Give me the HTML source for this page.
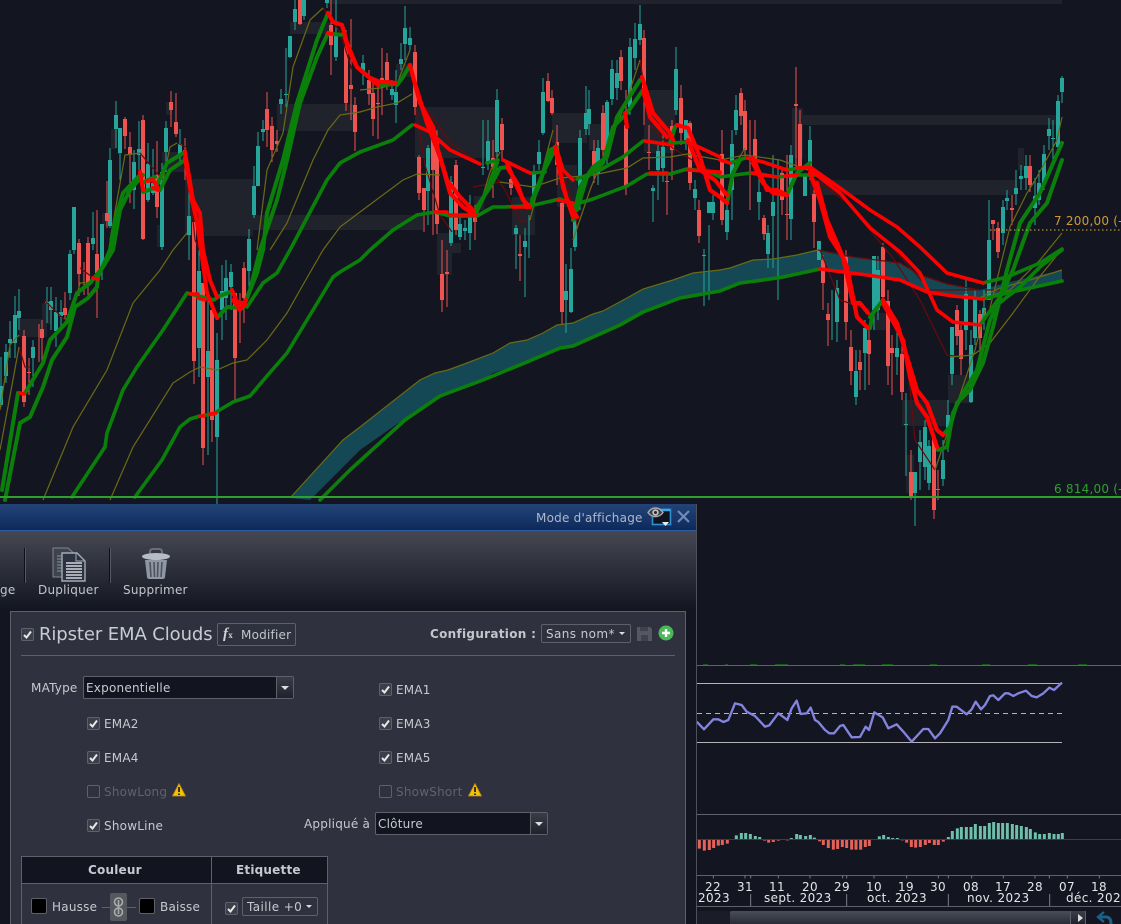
<!DOCTYPE html>
<html><head><meta charset="utf-8">
<style>
html,body{margin:0;padding:0;background:#131620;width:1121px;height:924px;overflow:hidden}
body{position:relative;font-family:"DejaVu Sans","Liberation Sans",sans-serif;font-size:12px;color:#c6cad0;letter-spacing:.22px}
svg{position:absolute;left:0;top:0}
.a{position:absolute;white-space:nowrap;line-height:14px}
.cb{position:absolute;width:11px;height:11px;border:1px solid #5e606a;border-radius:2px;background:#3c3e4a}
.cb svg{left:0;top:0}
.cb.off{background:#2f323e}
.dis{color:#5f626c}
.sel{position:absolute;box-sizing:border-box;background:#12151f;border:1px solid #5e606a;border-radius:2px;line-height:22px;padding-left:2px;color:#c6cad0}
.sel i{position:absolute;right:0;top:0;bottom:0;width:16px;border-left:1px solid #5e606a;background:linear-gradient(#3a3d48,#20232d)}
.sel i:after{content:"";position:absolute;left:4px;top:9px;border:4px solid transparent;border-top:4px solid #ddd;border-bottom:0}
.dd{position:absolute;box-sizing:border-box;border:1px solid #5e606a;border-radius:2px;background:#2f323e;color:#c6cad0;padding-left:4px}
.dd:after{content:"";position:absolute;right:5px;top:7px;border:3px solid transparent;border-top:3px solid #ddd;border-bottom:0}
.ax{font-size:12px;color:#e4e6ea;position:absolute;white-space:nowrap;line-height:13px;letter-spacing:.35px}
</style></head><body>

<svg width="1121" height="924" viewBox="0 0 1121 924" fill="none">
<!-- zones -->
<path fill="#20232c" d="M185 179h68v57h-68zM277 104h76v27h-76zM250 215h173v15H250zM415 107h82v51h-82zM327 0h735v4H327zM552 113h35v30h-35zM644 90h31v63h-31zM792 115h265v10H792zM792 108h11v50h-11zM810 180h207v15H810zM512 197h23v38h-23zM557 165h20v42h-20zM290 22h40v12h-40zM162 152h23v20h-23zM437 233h15v42h-15zM19 319h28v18H19zM42 303h10v21H42zM902 400h46v26h-46zM948 375h25v28h-25zM873 313h14v17h-14zM396 64h17v13H396zM589 124h16v26h-16zM111 129h6v20h-6zM116 153h4v1h-4zM166 102h6v13h-6zM102 213h5v13H102zM157 225h6v22h-6zM447 243h14v10h-14zM474 196h10v14h-10zM906 455h8v38h-8zM1018 148h6v22h-6z"/>
<!-- cloud band -->
<path fill="#134854" d="M290 498L343 440 360 427 380 412 420 380 435 373 448 370 467 363 493 353 510 343 527 340 543 333 557 325 573 323 593 314 603 311 627 298 643 289 673 280 693 273 720 270 730 268 753 260 773 259 797 255 818 250 843 254 853 257 900 263 920 275 947 284 980 290 1010 282 1062 270V281L1007 293 983 299 953 296 927 292 900 280 867 275 820 269 783 277 763 280 740 283 720 291 680 298 643 312 620 325 573 346 560 348 527 362 493 373 483 380 430 402 400 422 360 450 310 500Z"/>
<!-- wicks teal -->
<path stroke="#26a69a" stroke-width="1" d="M1 357V407M6 344V383M10 321V358M15 296V358M19 289V330M33 340V387M47 287V323M51 287V330M56 297V347M61 300V330M70 250V300M74 240V254M93 212V250M102 224V280M110 148V228M116 101V148M120 128V180M134 150V209M139 121V170M148 143V202M153 149V195M162 163V250M166 121V172M180 129V165M189 191V260M199 250V377M208 300V455M217 333V505M222 265V340M226 260V320M231 264V310M249 229V290M254 166V218M258 132V186M263 120V141M281 89V114M286 48V107M290 36V58M295 0V30M304 0V20M327 0V8M336 0V61M363 55V85M392 80V100M396 70V123M401 43V70M405 6V60M410 27V50M428 145V225M451 176V246M460 215V240M465 220V240M470 195V250M483 120V175M488 120V170M497 89V170M516 225V269M525 228V297M529 215V258M534 165V205M539 140V170M543 78V135M566 264V333M571 248V313M575 205V251M580 130V210M586 86V135M589 90V135M598 140V185M607 100V165M612 60V105M617 60V100M630 38V115M635 23V70M640 5V45M653 185V222M658 145V200M663 130V182M676 47V115M686 120V150M695 180V210M709 225V300M704 249V306M713 195V220M727 205V240M732 130V220M736 95V135M759 170V220M768 225V268M773 155V268M778 160V300M791 145V240M810 126V180M837 280V342M832 290V340M856 350V405M865 320V390M874 256V330M878 256V320M897 330V375M906 393V476M915 472V526M920 430V490M925 420V480M929 440V490M943 440V486M948 400V452M952 327V385M966 280V350M971 330V403M975 290V345M984 290V330M989 200V290M1003 200V245M1007 190V210M1016 170V205M1021 165V190M1026 155V190M1035 178V225M1039 170V205M1044 145V190M1049 118V150M1053 120V160M1058 95V150M1062 76V103"/>
<!-- wicks red -->
<path stroke="#ef5350" stroke-width="1" d="M24 330V407M29 358V395M39 324V362M42 320V362M65 292V320M79 239V296M84 262V295M88 237V295M97 210V318M107 181V228M125 117V149M130 132V203M143 115V240M157 141V218M171 91V127M176 93V137M185 138V180M194 222V384M203 283V465M212 300V442M235 293V402M240 293V343M244 262V323M267 92V147M272 117V162M277 130V152M300 0V25M331 0V75M346 30V111M351 19V120M355 97V151M369 70V105M373 80V136M378 85V139M382 48V115M387 53V90M415 45V115M419 155V200M424 188V232M433 130V235M437 130V234M442 240V312M447 250V307M456 160V235M475 205V240M493 140V198M502 118V160M511 170V195M520 235V281M548 73V102M552 90V115M557 125V185M562 200V325M594 140V183M603 105V160M621 50V90M626 90V195M644 30V125M649 125V170M667 175V215M672 120V180M681 85V145M690 121V190M699 200V243M722 130V225M741 88V125M745 100V160M750 120V210M755 120V175M764 215V240M782 170V215M787 155V240M796 67V167M800 110V175M814 190V248M823 255V310M828 303V346M846 250V340M851 330V385M860 350V390M869 330V385M883 243V305M888 290V385M892 335V395M902 345V400M911 450V500M934 439V519M938 470V500M957 305V345M961 325V375M980 310V365M993 220V240M998 222V258M1012 195V225M1030 155V192"/>
<!-- bodies teal -->
<path stroke="#26a69a" stroke-width="4" d="M1 386V405M6 352V376M10 339V343M15 315V343M19 311V318M33 347V358M47 302V303M51 301V310M56 312V331M61 312V316M70 254V293M74 207V250M93 238V244M102 224V267M110 160V226M116 115V129M120 128V153M134 162V190M139 149V155M148 164V200M153 183V193M162 172V247M166 128V152M180 144V155M189 216V235M199 271V348M208 351V377M217 360V437M222 291V310M226 278V298M231 272V287M249 239V271M254 186V215M258 146V186M263 129V132M281 99V104M286 94V95M290 36V57M295 9V22M304 0V16M327 0V3M336 35V57M363 63V72M392 89V95M396 92V105M401 59V64M405 28V44M410 38V45M428 148V191M451 182V243M460 224V237M465 228V231M470 213V233M483 167V168M488 141V163M497 100V152M516 228V234M525 241V247M534 174V195M539 152V164M543 92V133M566 291V300M571 269V312M575 220V247M580 138V200M586 113V129M589 109V124M598 148V173M607 102V150M612 69V99M617 73V88M630 47V107M635 39V58M640 24V40M653 188V191M658 151V170M663 147V168M676 69V110M686 120V140M695 189V198M709 202V213M704 255V256M713 202V213M727 210V232M732 144V190M736 110V130M759 192V202M768 233V254M773 202V216M791 155V219M805 175V196M810 140V167M819 241V260M837 288V322M856 371V397M865 328V353M874 256V310M878 270V310M897 348V357M906 424V425M915 472V493M920 442V462M925 427V467M929 446V483M943 460V479M948 415V428M952 327V374M966 294V330M971 345V402M975 299V338M984 308V320M989 240V300M1003 207V233M1007 198V201M1016 188V194M1021 176V179M1026 166V178M1035 196V208M1039 183V200M1044 154V184M1049 129V136M1053 138V139M1058 101V147M1062 78V92"/>
<!-- bodies red -->
<path stroke="#ef5350" stroke-width="4" d="M24 336V402M29 372V373M42 329V338M65 308V315M79 243V274M88 243V286M97 254V273M107 213V221M125 119V136M130 147V155M143 120V239M157 175V207M171 102V110M176 122V134M185 150V152M194 222V361M203 283V448M212 310V420M235 293V358M244 268V298M267 109V130M272 126V150M277 141V144M300 0V24M331 25V45M346 46V103M351 85V89M355 105V132M369 80V94M373 93V119M378 103V104M382 78V85M387 62V80M415 52V107M419 157V193M424 188V210M433 134V170M437 138V224M442 274V300M447 272V274M456 165V230M475 209V222M493 158V167M502 124V150M511 179V188M520 254V256M548 81V101M552 98V113M557 142V165M562 203V312M594 151V166M603 113V150M621 57V81M626 125V187M644 38V88M649 152V153M667 181V182M672 126V150M681 98V133M690 123V183M699 210V236M722 154V220M741 93V116M745 111V150M755 139V167M764 218V234M782 173V200M787 214V215M796 104V106M800 124V167M814 194V222M823 260V283M828 314V320M846 257V322M851 347V371M860 362V370M869 340V354M883 247V297M888 301V366M892 348V353M902 354V392M911 472V496M934 439V510M938 489V490M957 310V336M961 330V359M980 314V338M993 220V224M998 228V252M1012 208V210M1030 166V185"/>
<!-- thin dark red -->
<g stroke="#6a0a0c" stroke-width="1.2">
<path d="M19 347L25 367 30 367M44 300L67 322M80 268L92 277M125 155L140 153 163 180M177 143L186 147 195 240 207 265M323 8L340 32 352 70M417 97L437 123 450 143 480 163M473 187L500 182M416 110L425 165 440 215 452 232M490 168L505 190 520 220 527 222M555 140L575 215 578 230M640 60L650 125 668 145 700 165 720 175M810 170L840 190 870 230 893 258 920 300 947 355 960 357M810 175L850 205 890 245 930 290 980 290M820 250L840 300 870 310M985 290L1010 290M905 340L915 440 935 470"/>
</g>
<!-- thin olive -->
<g stroke="#6b6a14" stroke-width="1.2">
<path d="M0 450L19 347M43 500L73 427 107 370 133 303 160 270 173 250 187 233M110 500L133 447 173 383 190 372 200 367 217 370 233 363 247 360 267 340 287 313 300 290 323 250 340 227 360 212 403 180 417 174 440 175M500 182L533 187 560 178 593 175 627 168 643 158 670 157 687 154 720 160 745 155 780 160 808 170"/>
<path d="M270 250L287 223 313 160 328 130 340 115 360 112 377 107 397 103 412 94M257 250L267 170 283 133 293 67 310 20 323 8M110 240L125 155 140 153M163 180L170 147 177 143M71 320L80 283 90 282M0 410L10 345 19 335M360 90L380 88 397 84 410 50M475 222L490 172 500 152M530 220L545 160 553 130M573 240L590 190 600 165 625 105 640 60M727 205L735 165 745 148M950 357L973 355 990 343 1013 313 1037 280 1062 249M990 308L1010 227 1027 193 1037 177 1057 140 1062 117M975 300L1000 288 1030 280 1062 270M975 300L1010 290 1040 260 1062 233M935 470L945 440 960 395 975 350 985 310"/>
<path d="M290 498L343 440 360 427 420 380 435 373 448 370 467 363 493 353 510 343 527 340 543 333 557 325 573 323 593 314 603 311 627 298 643 289 673 280 693 273 720 270 730 268 753 260 773 259 797 255 818 250"/>
<path stroke="#6a0a0c" d="M818 250L853 257 900 263 920 275 947 284 980 290"/>
</g>
<!-- thick green -->
<g stroke="#0a800a" stroke-width="3.6" stroke-linejoin="round" stroke-linecap="round">
<path d="M135 497L162 460 180 427 190 419 200 416 213 414 233 402 250 396 267 376 287 353 307 320 333 277 340 272 360 260 370 250 393 230 417 215 435 212 450 216 477 216 493 207 503 207 530 206 560 199 573 205 593 199 627 186 647 174 670 174 687 169 710 172 720 177 750 173 777 177 800 175 817 175"/>
<path d="M72 497L105 447 107 433 123 390 137 367 163 330 187 293 214 300 218 297 230 292M247 307L263 283 277 273 290 250 327 180 340 163 360 152 393 140 412 125M487 163L498 160M530 173L545 172M577 179L600 170 623 157 643 141M673 143L688 142M730 163L745 158M787 170L800 168"/>
<path d="M320 500L350 470 372 450 405 420 440 396 483 380 527 362 560 348 573 346 620 325 643 312 680 298 720 291 740 283 763 280 783 277 820 269M983 299L1007 293 1062 281"/>
<path d="M983 283L1007 277 1040 263 1062 249M980 325L1007 287M993 308L1020 287 1040 267 1062 250"/>
<path stroke-width="4" d="M2 490L18 393M25 393L43 363 50 340 67 322 77 293 90 283 103 267 113 250 120 210 130 190 143 175M5 500L20 423 30 417 43 387 52 360 67 337 75 307 88 298 97 287 98 277M98 277L110 250 115 220 123 193 140 175M143 192L157 187M158 183L167 163 185 152M160 190L170 170 185 160M144 182L155 177"/>
<path stroke-width="4" d="M217 318L227 307 243 308 257 273 263 250 267 213 283 160 297 103 317 40 328 13M243 308L250 290 260 250 277 200 287 160 300 103 317 57 328 33M217 297L230 292"/>
<path stroke-width="4" d="M332 34L345 35M378 85L395 84M397 85L403 77 410 65M475 215L487 190 497 163M475 210L490 187 500 168 507 167M530 207L540 183 550 150 557 147M532 200L543 173 553 153M573 220L580 187 593 167 607 157 617 117 640 80M577 210L587 177 603 163 613 127 627 113 643 90M670 143L675 127M727 203L733 173 740 160M787 195L797 173 810 163"/>
<path stroke-width="4" d="M870 317L883 300M870 328L873 313 883 300M943 435L950 427 957 403 970 390 983 363 993 327 1007 270 1020 223 1040 193 1062 143M938 450L947 447 953 413 963 393 977 370 990 320 1000 297 1013 270 1030 223 1047 203 1062 160"/>
</g>
<!-- thick red -->
<g stroke="#ff0000" stroke-width="3.6" stroke-linejoin="round" stroke-linecap="round">
<path d="M190 294L198 294M198 298L205 300M435 212L447 212M450 215L473 215M512 207L530 207M558 200L573 203M650 173L667 173M688 170L720 172 720 173M752 173L777 177M785 176L797 175M200 416L204 416M210 414L216 413M20 393L24 394M93 278L98 279"/>
<path d="M415 125L430 132 450 150 480 164M503 160L530 173M557 150L563 170 573 180M645 141L672 145M688 142L720 157M720 160L730 163M747 158L763 162 787 170M797 168L810 167"/>
<path d="M810 167L840 188 870 210 897 227 920 247 947 273 983 283M810 170L840 193 870 228 900 252 920 273 937 310 953 322 980 325M820 269L867 275 900 280 927 292 953 296 983 299"/>
<path stroke-width="4" d="M140 172L143 190M147 181L153 180 157 186M153 188L158 190M185 152L193 200 200 213 203 250 210 280 217 297M185 158L192 200 197 222 202 257 207 293 217 318M232 290L237 302 243 303 245 305M233 300L240 310 246 300"/>
<path stroke-width="4.200" d="M328 13L333 22 342 25 347 43 357 67 370 78 380 82 387 82 395 83M328 33L332 34M345 38L350 53 357 67 378 85M410 65L420 103 433 127 438 150 447 180 460 197 473 210M413 77L427 123 440 157 450 193 463 207 475 215M507 163L517 187 527 207M507 167L517 183 523 200 530 207M555 147L560 173 567 200 577 217M557 153L563 187 573 217M642 77L653 113 670 133 673 140M643 90L650 117 667 137M625 113L627 127M677 125L688 128 700 157 710 190 720 197 727 203M688 140L700 170 715 180 727 195M753 163L763 183 773 193 787 195M753 158L767 190 777 190 787 195"/>
<path stroke-width="4.200" d="M810 173L820 200 830 237 843 257 853 303 860 303 868 313M817 183L827 220 837 243 847 267 857 317 868 328M883 300L897 323 907 357 917 390 927 403 937 430 943 435M883 303L903 340 910 377 917 403 927 417 937 447"/>
</g>
<!-- horizontals -->
<path stroke="#2f9f2f" stroke-width="2" d="M0 497H1121"/>
<path stroke="#d8b040" stroke-width="1" stroke-dasharray="1.5 2.5" d="M990 230H1121"/>
<!-- lower panels -->
<path stroke="#5f626c" stroke-width="1" d="M697 665.5H1121M697 814.5H1121M697 875.5H1121M697 906.5H1121"/>
<path stroke="#135a13" stroke-width="1" d="M703 664.500h5M725 664.500h3M750 664.500h7M775 664.500h13M840 664.500h5M853 664.500h12M882 664.500h11M930 664.500h7M982 664.500h8M1028 664.500h9M1078 664.500h9"/>
<path stroke="#b4b4b8" stroke-width="1" d="M697 683.5H1062M697 742.5H1062"/>
<path stroke="#b4b4b8" stroke-width="1" stroke-dasharray="5 4" d="M697 713.5H1062"/>
<g transform="translate(690,660) scale(.33333)">
<path stroke="#8484e0" stroke-width="7" stroke-linejoin="round" d="M20 185L42 208 70 178 85 178 100 186 115 180 135 130 155 135 170 155 195 168 225 200 238 196 265 160 292 180 305 145 320 122 332 162 350 160 362 143 375 180 385 186 405 210 418 220 432 220 450 198 460 195 485 232 510 231 527 200 537 210 553 157 578 172 595 205 620 193 640 215 665 245 700 207 715 207 735 235 750 220 775 180 787 140 800 140 830 163 845 148 857 125 873 148 885 135 900 108 910 106 925 120 945 100 955 100 970 108 985 100 1008 92 1025 108 1040 112 1060 100 1078 83 1092 90 1116 68"/>
<path stroke="#e4625a" stroke-width="9" d="M28 538V566M43 538V572M58 538V570M71 538V564M85 538V557M97 538V555M112 538V551M224 538V542M236 538V548M250 538V546M265 538V542M292 538V541M389 538V544M400 538V555M415 538V564M430 538V569M443 538V567M457 538V561M470 538V564M485 538V569M498 538V569M512 538V569M526 538V561M538 538V558M637 538V541M650 538V548M664 538V561M677 538V563M691 538V561M706 538V555M718 538V549M733 538V555M745 538V555M760 538V545"/>
<path stroke="#6ec0ac" stroke-width="9" d="M139 538V526M154 538V519M167 538V519M181 538V522M196 538V528M209 538V531M304 538V534M320 538V522M331 538V525M347 538V528M361 538V525M373 538V533M568 538V529M581 538V525M595 538V531M608 538V534M622 538V534M775 538V531M787 538V513M802 538V505M814 538V501M829 538V501M843 538V501M856 538V492M871 538V498M884 538V498M898 538V489M911 538V486M925 538V489M938 538V489M952 538V489M967 538V492M980 538V495M994 538V498M1009 538V501M1021 538V507M1036 538V517M1049 538V522M1063 538V522M1078 538V519M1092 538V522M1105 538V522M1117 538V519"/>
<path stroke="#2c2cc0" stroke-width="3" d="M10 538.5H1293"/>
<path stroke="#7a7c84" stroke-width="3" d="M70 647V655M165 647V655M182 647V655M265 647V655M360 647V655M458 647V655M470 647V655M552 647V655M650 647V655M745 647V655M775 647V655M845 647V655M940 647V655M1035 647V655M1078 647V655M1132 647V655M1228 647V655M182 702V738M470 702V738M775 702V738M1079 702V738"/>
</g>
</svg>

<!-- price labels -->
<div class="a" style="left:1054px;top:214px;font-size:12px;color:#cf9a38">7 200,00 (-</div>
<div class="a" style="left:1054px;top:482px;font-size:12px;color:#2fa02f">6 814,00 (-</div>

<!-- time axis -->
<div class="ax" style="left:705px;top:881px">22</div><div class="ax" style="left:737px;top:881px">31</div><div class="ax" style="left:769px;top:881px">11</div><div class="ax" style="left:802px;top:881px">20</div><div class="ax" style="left:834px;top:881px">29</div><div class="ax" style="left:866px;top:881px">10</div><div class="ax" style="left:898px;top:881px">19</div><div class="ax" style="left:930px;top:881px">30</div><div class="ax" style="left:963px;top:881px">08</div><div class="ax" style="left:995px;top:881px">17</div><div class="ax" style="left:1027px;top:881px">28</div><div class="ax" style="left:1059px;top:881px">07</div><div class="ax" style="left:1091px;top:881px">18</div>
<div class="ax" style="left:698px;top:892px">2023</div><div class="ax" style="left:764px;top:892px">sept. 2023</div><div class="ax" style="left:867px;top:892px">oct. 2023</div><div class="ax" style="left:967px;top:892px">nov. 2023</div><div class="ax" style="left:1066px;top:892px">déc. 2023</div>

<!-- scrollbar -->
<div style="position:absolute;left:697px;top:907px;width:424px;height:17px;background:#131620"></div>
<div style="position:absolute;left:697px;top:911px;width:33px;height:13px;background:#1a1d27"></div>
<div style="position:absolute;left:730px;top:911px;width:340px;height:13px;background:linear-gradient(#4a4d58,#2a2d38);border-radius:2px 0 0 0"></div>
<div style="position:absolute;left:1070px;top:911px;width:16px;height:13px;background:linear-gradient(#3c3f4a,#20232c);border-left:1px solid #5f626c;border-right:1px solid #5f626c;box-sizing:border-box"></div>
<div style="position:absolute;left:1078px;top:914px;border:4px solid transparent;border-left:5px solid #ddd;border-right:0"></div>
<svg style="left:1094px;top:910px" width="20" height="14" fill="none"><path d="M10 2L4 7l6 5" stroke="#1c5f86" stroke-width="2.4"/><path d="M5 7h7c3 0 5 2 5 7" stroke="#1c5f86" stroke-width="3"/></svg>

<!-- dialog -->
<div style="position:absolute;left:0;top:504px;width:697px;height:420px;background:#131620;border-right:1px solid #4e505a;box-sizing:border-box">
 <div style="position:absolute;left:0;top:0;right:0;height:26px;background:linear-gradient(#234377,#0e2a5c);border-bottom:1px solid #2f5c9c"></div>
 <div style="position:absolute;left:0;top:27px;right:0;height:80px;background:linear-gradient(#454852,#12151f)"></div>
 <div class="a" style="left:536px;top:7px;color:#aeb8cc">Mode d'affichage</div>
</div>
<svg style="left:646px;top:504px" width="50" height="26" fill="none">
 <rect x="6.500" y="5.500" width="18" height="15" fill="#101420" stroke="#2f8fd0" stroke-width="1.600"/><path d="M7 6h17" stroke="#38a8e8" stroke-width="2.500"/>
 <path d="M2 8.500C6 2.500 13 2.500 17 8.500 13 14 6 14 2 8.500Z" fill="#3c3f48" stroke="#a8aaae" stroke-width="1.400"/><circle cx="9.500" cy="8.500" r="3.200" fill="#c0c2c6"/><circle cx="9.500" cy="8.500" r="1.500" fill="#24262c"/>
 <path d="M16 18h7l-3.500 4Z" fill="#eee"/>
 <path d="M32 7l11 11M43 7L32 18" stroke="#6f8ab8" stroke-width="2.200"/>
</svg>

<!-- toolbar -->
<div style="position:absolute;left:24px;top:548px;width:1px;height:35px;background:#0e1018;box-shadow:1px 0 0 #555862"></div>
<div style="position:absolute;left:109px;top:548px;width:1px;height:35px;background:#0e1018;box-shadow:1px 0 0 #555862"></div>
<svg style="left:50px;top:545px" width="40" height="38" fill="none">
 <path d="M3 3h15l9 8v21H3Z" fill="#3e4350" stroke="#7f8590" stroke-width="1"/>
 <path d="M7 11h7M7 14h7M7 17h7M7 20h7M7 23h7M7 26h7" stroke="#8a8f98"/>
 <path d="M12 8h15l8 8v20H12Z" fill="#2b3340" stroke="#a4abb4" stroke-width="1.400"/>
 <path d="M26 8v8h8" stroke="#a4abb4" stroke-width="1"/>
 <path d="M16 18h16M16 21h16M16 24h16M16 27h16M16 30h16M16 33h16" stroke="#d6d8dc" stroke-width="1.600"/>
</svg>
<svg style="left:140px;top:547px" width="32" height="34" fill="none">
 <path d="M10 8V5c0-2 1-3 3-3h6c2 0 3 1 3 3v3" stroke="#6a6e78" stroke-width="2"/>
 <ellipse cx="16" cy="9.500" rx="14" ry="3.500" fill="#b6bcc6"/>
 <path d="M5 13h22l-2 17c-.3 1.600-1 2-3 2H10c-2 0-2.700-.4-3-2Z" fill="#8f97a4"/>
 <path d="M10 15l1 15M14 15l.5 15M18 15l-.5 15M22 15l-1 15" stroke="#4d535e" stroke-width="1.600"/>
</svg>
<div class="a" style="left:0;top:583px;color:#c2c6cc">ge</div>
<div class="a" style="left:38px;top:583px;color:#c2c6cc">Dupliquer</div>
<div class="a" style="left:123px;top:583px;color:#c2c6cc">Supprimer</div>

<!-- panel -->
<div style="position:absolute;left:10px;top:611px;width:676px;height:313px;box-sizing:border-box;background:#2f323e;border:1px solid #5e606a;border-bottom:0"></div>
<div style="position:absolute;left:21px;top:655px;width:654px;height:1px;background:#5e606a"></div>

<div class="cb" style="left:21px;top:628px"><svg width="11" height="11" fill="none"><path d="M2 6l2.500 2.500L9 2.500" stroke="#e8e8e8" stroke-width="2"/></svg></div>
<div class="a" style="left:39px;top:624px;font-size:18px;line-height:22px;color:#c8ccd2;letter-spacing:-.1px">Ripster EMA Clouds</div>
<div style="position:absolute;left:217px;top:623px;width:79px;height:23px;box-sizing:border-box;border:1px solid #5e606a;border-radius:2px"></div>
<div class="a" style="left:223px;top:626px;font-family:'Liberation Serif',serif;font-style:italic;font-weight:bold;font-size:15px;line-height:16px;color:#d0d2d6">f<span style="font-size:9px;font-style:normal">x</span></div>
<div class="a" style="left:241px;top:628px;color:#c2c6cc">Modifier</div>
<div class="a" style="left:430px;top:627px;font-weight:bold;color:#c2c6cc;letter-spacing:.3px">Configuration :</div>
<div class="dd" style="left:541px;top:624px;width:90px;height:19px;line-height:18px;letter-spacing:.4px">Sans nom*</div>
<svg style="left:637px;top:626px" width="15" height="15"><path d="M0 1h13l2 2v12H0Z" fill="#555862"/><path d="M3 1h8v4H3ZM4 9h7v6H4Z" fill="#3f424c"/></svg>
<svg style="left:658px;top:625px" width="16" height="16"><circle cx="8" cy="8" r="7.500" fill="#4cb85a"/><path d="M8 4v8M4 8h8" stroke="#fff" stroke-width="2.400"/></svg>

<div class="a" style="left:31px;top:681px">MAType</div>
<div class="sel" style="left:83px;top:676px;width:211px;height:23px">Exponentielle<i></i></div>

<div class="cb" style="left:379px;top:683px"><svg width="11" height="11" fill="none"><path d="M2 6l2.500 2.500L9 2.500" stroke="#e8e8e8" stroke-width="2"/></svg></div><div class="a" style="left:396px;top:683px">EMA1</div>
<div class="cb" style="left:87px;top:717px"><svg width="11" height="11" fill="none"><path d="M2 6l2.500 2.500L9 2.500" stroke="#e8e8e8" stroke-width="2"/></svg></div><div class="a" style="left:104px;top:717px">EMA2</div>
<div class="cb" style="left:379px;top:717px"><svg width="11" height="11" fill="none"><path d="M2 6l2.500 2.500L9 2.500" stroke="#e8e8e8" stroke-width="2"/></svg></div><div class="a" style="left:396px;top:717px">EMA3</div>
<div class="cb" style="left:87px;top:751px"><svg width="11" height="11" fill="none"><path d="M2 6l2.500 2.500L9 2.500" stroke="#e8e8e8" stroke-width="2"/></svg></div><div class="a" style="left:104px;top:751px">EMA4</div>
<div class="cb" style="left:379px;top:751px"><svg width="11" height="11" fill="none"><path d="M2 6l2.500 2.500L9 2.500" stroke="#e8e8e8" stroke-width="2"/></svg></div><div class="a" style="left:396px;top:751px">EMA5</div>
<div class="cb off" style="left:87px;top:785px"></div><div class="a dis" style="left:104px;top:785px">ShowLong</div>
<div class="cb off" style="left:379px;top:785px"></div><div class="a dis" style="left:396px;top:785px">ShowShort</div>
<svg style="left:172px;top:783px" width="14" height="14"><path d="M7 .5L13.500 13H.5Z" fill="#f2c010" stroke="#c08808" stroke-width=".8"/><path d="M7 4v5M7 10.500v1.500" stroke="#222" stroke-width="1.800"/></svg>
<svg style="left:468px;top:783px" width="14" height="14"><path d="M7 .5L13.500 13H.5Z" fill="#f2c010" stroke="#c08808" stroke-width=".8"/><path d="M7 4v5M7 10.500v1.500" stroke="#222" stroke-width="1.800"/></svg>
<div class="cb" style="left:87px;top:819px"><svg width="11" height="11" fill="none"><path d="M2 6l2.500 2.500L9 2.500" stroke="#e8e8e8" stroke-width="2"/></svg></div><div class="a" style="left:104px;top:819px">ShowLine</div>
<div class="a" style="left:304px;top:817px">Appliqué à</div>
<div class="sel" style="left:375px;top:812px;width:173px;height:23px">Clôture<i></i></div>

<!-- table -->
<div style="position:absolute;left:21px;top:856px;width:307px;height:68px;box-sizing:border-box;border:1px solid #5e606a;border-bottom:0"></div>
<div style="position:absolute;left:22px;top:857px;width:305px;height:26px;background:#12151f;border-bottom:1px solid #5e606a"></div>
<div style="position:absolute;left:211px;top:857px;width:1px;height:67px;background:#5e606a"></div>
<div class="a" style="left:88px;top:863px;font-weight:bold;color:#c6cad0;letter-spacing:.2px">Couleur</div>
<div class="a" style="left:236px;top:863px;font-weight:bold;color:#c6cad0;letter-spacing:.2px">Etiquette</div>
<div style="position:absolute;left:31px;top:898px;width:16px;height:16px;box-sizing:border-box;background:#000;border:1px solid #5e606a;border-radius:2px"></div>
<div class="a" style="left:52px;top:900px">Hausse</div>
<div style="position:absolute;left:102px;top:907px;width:8px;height:1px;background:#5e606a"></div>
<div style="position:absolute;left:127px;top:907px;width:9px;height:1px;background:#5e606a"></div>
<svg style="left:110px;top:893px" width="18" height="28" fill="none"><rect width="17" height="28" rx="2" fill="#55585f"/><circle cx="8.500" cy="9" r="4" stroke="#aaa" stroke-width="1.600"/><circle cx="8.500" cy="19" r="4" stroke="#aaa" stroke-width="1.600"/><path d="M8.500 7v14" stroke="#aaa" stroke-width="1.600"/></svg>
<div style="position:absolute;left:139px;top:898px;width:16px;height:16px;box-sizing:border-box;background:#000;border:1px solid #5e606a;border-radius:2px"></div>
<div class="a" style="left:160px;top:900px">Baisse</div>
<div class="cb" style="left:225px;top:902px"><svg width="11" height="11" fill="none"><path d="M2 6l2.500 2.500L9 2.500" stroke="#e8e8e8" stroke-width="2"/></svg></div>
<div class="dd" style="left:242px;top:897px;width:76px;height:19px;line-height:18px;letter-spacing:.4px">Taille +0</div>
</body></html>
